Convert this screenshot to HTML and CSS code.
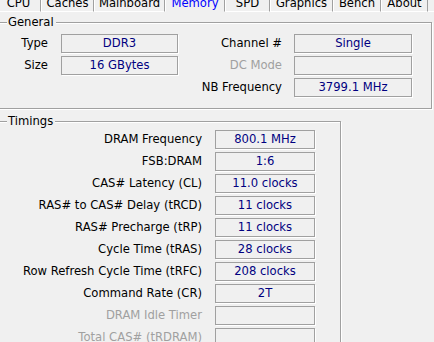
FILE: index.html
```html
<!DOCTYPE html>
<html lang="en">
<head>
    <meta charset="UTF-8">
    <title>CPU-Z Memory</title>
    <link rel="stylesheet" href="styles.css">
</head>
<body>

    <div class="tabs">
        <div class="tab tab-cpu">CPU</div>
        <div class="tab tab-caches">Caches</div>
        <div class="tab tab-mainboard">Mainboard</div>
        <div class="tab tab-memory active">Memory</div>
        <div class="tab tab-spd">SPD</div>
        <div class="tab tab-graphics">Graphics</div>
        <div class="tab tab-bench">Bench</div>
        <div class="tab tab-about">About</div>
        <div class="tab-fill"></div>
    </div>

    <div class="main">
        <div class="group group-general">
            <span class="group-title">General</span>
            <div class="general-grid">
                <div class="label">Type</div>
                <div class="value">DDR3</div>
                <div class="label label-right">Channel #</div>
                <div class="value">Single</div>

                <div class="label">Size</div>
                <div class="value">16 GBytes</div>
                <div class="label label-right off">DC Mode</div>
                <div class="value"></div>

                <div class="label"></div>
                <div></div>
                <div class="label label-right">NB Frequency</div>
                <div class="value">3799.1 MHz</div>
            </div>
        </div>

        <div class="group group-timings">
            <span class="group-title">Timings</span>
            <div class="timings-grid">
                <div class="label">DRAM Frequency</div>
                <div class="value">800.1 MHz</div>
                <div class="label">FSB:DRAM</div>
                <div class="value">1:6</div>
                <div class="label">CAS# Latency (CL)</div>
                <div class="value">11.0 clocks</div>
                <div class="label">RAS# to CAS# Delay (tRCD)</div>
                <div class="value">11 clocks</div>
                <div class="label">RAS# Precharge (tRP)</div>
                <div class="value">11 clocks</div>
                <div class="label">Cycle Time (tRAS)</div>
                <div class="value">28 clocks</div>
                <div class="label">Row Refresh Cycle Time (tRFC)</div>
                <div class="value">208 clocks</div>
                <div class="label">Command Rate (CR)</div>
                <div class="value">2T</div>
                <div class="label off">DRAM Idle Timer</div>
                <div class="value"></div>
                <div class="label off">Total CAS# (tRDRAM)</div>
                <div class="value"></div>
            </div>
        </div>
    </div>

</body>
</html>
```

FILE: styles.css
```css
body {
    margin: 0;
    background-color: #f0f0f0;
    color: #000;
    font-family: "DejaVu Sans", Tahoma, sans-serif;
    font-size: 11.6px;
    overflow: hidden;
    height: 342px;
}

/* Reiter oben, nur die untere Hälfte sichtbar */
.tabs {
    display: flex;
    height: 12px;
    overflow: hidden;
}
.tab {
    box-sizing: border-box;
    height: 12px;
    line-height: 6px;
    text-align: center;
    border-left: 1px solid #fff;
    border-right: 1px solid #a0a0a0;
    border-bottom: 1px solid #fff;
    flex: 0 0 auto;
    white-space: nowrap;
}
.tab.active {
    color: #0000ff;
    border-bottom-color: #f0f0f0;
}
.tab-cpu { width: 45px; margin-left: -4px; }
.tab-caches { width: 53px; }
.tab-mainboard { width: 71px; }
.tab-memory { width: 60px; }
.tab-spd { width: 45px; }
.tab-graphics { width: 63px; }
.tab-bench { width: 48px; }
.tab-about { width: 47px; }
.tab-fill {
    flex: 1;
    border-bottom: 1px solid #fff;
}

.main {
    padding-top: 10px;
}

/* Gruppenrahmen im Windows-Stil (geätzt) */
.group {
    position: relative;
    box-sizing: border-box;
    margin-left: -2px;
    border: 1px solid #a0a0a0;
    box-shadow: 1px 1px 0 #fff, inset 1px 1px 0 #fff;
}
.group-title {
    position: absolute;
    top: -8px;
    left: 8px;
    padding: 0 2px 0 1px;
    line-height: 14px;
    background-color: #f0f0f0;
}
.group-general {
    width: 434px;
    height: 87px;
}
.group-timings {
    width: 343px;
    height: 240px;
    margin-top: 12px;
}

.general-grid {
    display: grid;
    grid-template-columns: 62px 117px 116px 118px;
    grid-auto-rows: 19px;
    row-gap: 3px;
    padding-top: 11px;
}
.timings-grid {
    display: grid;
    grid-template-columns: 216px 100px;
    grid-auto-rows: 19px;
    row-gap: 3px;
    padding-top: 8px;
}

.label {
    text-align: right;
    padding-right: 13px;
    line-height: 19px;
    white-space: nowrap;
}
.label-right {
    padding-right: 12px;
}
.label.off {
    color: #a0a0a0;
}
.value {
    box-sizing: border-box;
    border: 1px solid #a0a0a0;
    box-shadow: 1px 1px 0 #fff;
    color: #000080;
    text-align: center;
    line-height: 17px;
    white-space: nowrap;
}
```
